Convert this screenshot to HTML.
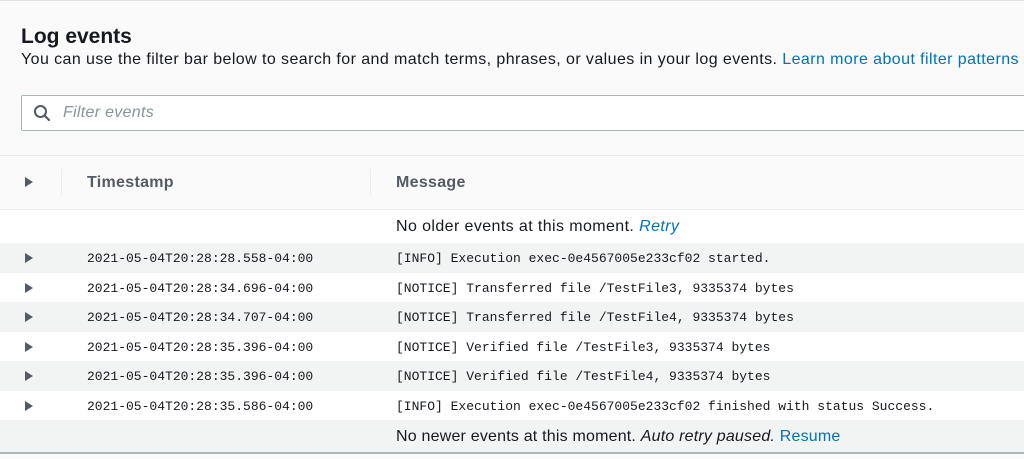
<!DOCTYPE html>
<html><head><style>
body{margin:0;width:1024px;height:459px;overflow:hidden;background:#fafafa;font-family:"Liberation Sans",sans-serif;color:#16191f;position:relative}
.a{position:absolute;white-space:nowrap}
.mono{font-family:"Liberation Mono",monospace;font-size:13px;color:#16191f}
.row{position:absolute;left:0;width:1024px;height:29.5px}
.tri{position:absolute;left:25px;width:0;height:0;border-left:8px solid #545b64;border-top:5px solid transparent;border-bottom:5px solid transparent}
</style></head><body>
<div class="a" style="left:0;top:0;width:1024px;height:1px;background:#e0e0e0"></div>
<div class="a" style="left:21px;top:25px;font-size:21px;font-weight:bold">Log events</div>
<div class="a" style="left:21px;top:51px;font-size:16px;letter-spacing:0.42px;color:#16191f">You can use the filter bar below to search for and match terms, phrases, or values in your log events. <span style="color:#0073bb">Learn more about filter patterns</span></div>
<div class="a" style="left:21px;top:95px;width:1010px;height:34px;background:#fff;border:1px solid #aab7b8;border-radius:2px"></div>
<svg class="a" style="left:33px;top:104px" width="18" height="18" viewBox="0 0 18 18"><circle cx="7.5" cy="7.5" r="5.5" fill="none" stroke="#545b64" stroke-width="2"/><path d="M11.5 11.5L16 16" stroke="#545b64" stroke-width="2.2" stroke-linecap="round"/></svg>
<div class="a" style="left:63px;top:104px;font-size:16px;letter-spacing:0.3px;font-style:italic;color:#879596">Filter events</div>
<div class="a" style="left:0;top:155px;width:1024px;height:1px;background:#eaeded"></div>
<div class="a" style="left:0;top:209px;width:1024px;height:1px;background:#eaeded"></div>
<div class="tri" style="top:177px"></div>
<div class="a" style="left:61px;top:169px;width:1px;height:26px;background:#eaeded"></div>
<div class="a" style="left:370px;top:169px;width:1px;height:26px;background:#eaeded"></div>
<div class="a" style="left:87px;top:174px;font-size:16px;letter-spacing:0.3px;font-weight:bold;color:#545b64">Timestamp</div>
<div class="a" style="left:396px;top:174px;font-size:16px;letter-spacing:0.3px;font-weight:bold;color:#545b64">Message</div>
<div class="a" style="left:0;top:210px;width:1024px;height:33px;background:#fff"></div>
<div class="a" style="left:396px;top:218px;font-size:16px;letter-spacing:0.4px">No older events at this moment. <i style="color:#0073bb">Retry</i></div>

<div class="row" style="top:243px;background:#f2f3f3"><div class="tri" style="top:10px"></div><div class="a mono" style="left:87px;top:8px">2021-05-04T20:28:28.558-04:00</div><div class="a mono" style="left:396px;top:8px">[INFO] Execution exec-0e4567005e233cf02 started.</div></div>
<div class="row" style="top:272.5px;background:#fff"><div class="tri" style="top:10px"></div><div class="a mono" style="left:87px;top:8px">2021-05-04T20:28:34.696-04:00</div><div class="a mono" style="left:396px;top:8px">[NOTICE] Transferred file /TestFile3, 9335374 bytes</div></div>
<div class="row" style="top:302px;background:#f2f3f3"><div class="tri" style="top:10px"></div><div class="a mono" style="left:87px;top:8px">2021-05-04T20:28:34.707-04:00</div><div class="a mono" style="left:396px;top:8px">[NOTICE] Transferred file /TestFile4, 9335374 bytes</div></div>
<div class="row" style="top:331.5px;background:#fff"><div class="tri" style="top:10px"></div><div class="a mono" style="left:87px;top:8px">2021-05-04T20:28:35.396-04:00</div><div class="a mono" style="left:396px;top:8px">[NOTICE] Verified file /TestFile3, 9335374 bytes</div></div>
<div class="row" style="top:361px;background:#f2f3f3"><div class="tri" style="top:10px"></div><div class="a mono" style="left:87px;top:8px">2021-05-04T20:28:35.396-04:00</div><div class="a mono" style="left:396px;top:8px">[NOTICE] Verified file /TestFile4, 9335374 bytes</div></div>
<div class="row" style="top:390.5px;background:#fff"><div class="tri" style="top:10px"></div><div class="a mono" style="left:87px;top:8px">2021-05-04T20:28:35.586-04:00</div><div class="a mono" style="left:396px;top:8px">[INFO] Execution exec-0e4567005e233cf02 finished with status Success.</div></div>
<div class="a" style="left:0;top:420px;width:1024px;height:32px;background:#f2f3f3"></div>
<div class="a" style="left:396px;top:428px;font-size:16px;letter-spacing:0.2px">No newer events at this moment. <i>Auto retry paused.</i> <span style="color:#0073bb">Resume</span></div>
<div class="a" style="left:0;top:452px;width:1024px;height:2px;background:#aab7b8"></div>
<div class="a" style="left:0;top:454px;width:1024px;height:5px;background:#fafafa"></div>
</body></html>
